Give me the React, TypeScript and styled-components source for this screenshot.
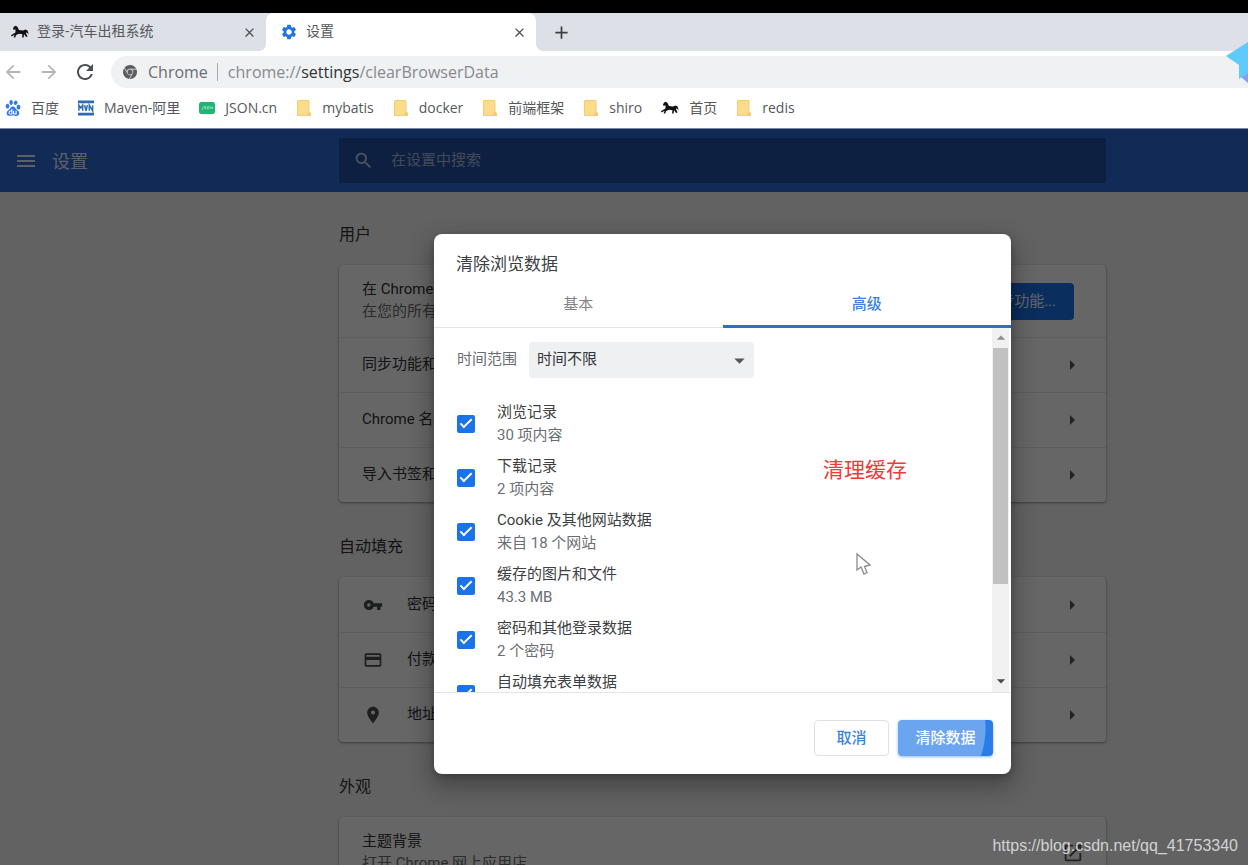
import React from "react";
import styled, { createGlobalStyle, css } from "styled-components";
import {
  MdAdd,
  MdArrowBack,
  MdArrowDropDown,
  MdArrowForward,
  MdArrowRight,
  MdClose,
  MdCreditCard,
  MdMenu,
  MdOpenInNew,
  MdPlace,
  MdRefresh,
  MdSearch,
  MdSettings,
  MdVpnKey,
} from "react-icons/md";
import { SiBaidu, SiGooglechrome } from "react-icons/si";

const uiFont = `"Open Sans", "Noto Sans CJK SC", sans-serif`;
const pageFont = `Roboto, "Noto Sans CJK SC", sans-serif`;

const GlobalStyle = createGlobalStyle`
  *, *::before, *::after { box-sizing: border-box; }
  body { margin: 0; background: #000; font-family: ${pageFont}; font-size: 15px; overflow: hidden; }
  button, input, select { font: inherit; }
  h1, h2, p { margin: 0; font-weight: 400; }
  svg { display: block; flex: none; }
`;

const Screen = styled.div`
  position: relative;
  display: flex;
  flex-direction: column;
  height: 100vh;
  padding-top: 13px;
  overflow: hidden;
`;

/* Browser frame */

const BrowserFrame = styled.header`
  flex: none;
  background: #fff;
  border-bottom: 1px solid #7f8aa6;
  font-family: ${uiFont};
  color: #55585c;
`;

const TabStrip = styled.div`
  display: flex;
  align-items: stretch;
  height: 38px;
  background: #dde0e7;
`;

const BrowserTab = styled.div<{ $active?: boolean }>`
  position: relative;
  display: flex;
  align-items: center;
  gap: 8px;
  width: ${(p) => (p.$active ? 270 : 266)}px;
  padding: 0 8px 0 ${(p) => (p.$active ? 14 : 11)}px;
  font-size: 14px;
  ${(p) =>
    p.$active &&
    css`
      background: #fff;
      border-radius: 8px 8px 0 0;
      &::before,
      &::after {
        content: "";
        position: absolute;
        bottom: 0;
        width: 8px;
        height: 8px;
      }
      &::before {
        left: -8px;
        background: radial-gradient(circle at 0 0, #dde0e7 8px, #fff 8px);
      }
      &::after {
        right: -8px;
        background: radial-gradient(circle at 100% 0, #dde0e7 8px, #fff 8px);
      }
    `}
`;

const TabName = styled.span`
  flex: 1;
  white-space: nowrap;
  line-height: 20px;
  padding-bottom: 2px;
`;

const PlainButton = styled.button`
  display: flex;
  align-items: center;
  justify-content: center;
  padding: 0;
  border: 0;
  background: none;
  color: inherit;
`;

const TabClose = styled(PlainButton)`
  width: 18px;
  height: 18px;
  color: #4d5055;
`;

const NewTab = styled(PlainButton)`
  width: 50px;
  color: #3c4043;
`;

const Toolbar = styled.div`
  display: flex;
  align-items: center;
  height: 41px;
  padding-left: 3px;
`;

const NavButton = styled(PlainButton)<{ $dim?: boolean }>`
  width: 20px;
  height: 24px;
  margin-right: 16px;
  color: ${(p) => (p.$dim ? "#b4b6b9" : "#4b4e52")};
`;

const AddressBar = styled.div`
  display: flex;
  align-items: center;
  flex: 1;
  height: 32px;
  padding-left: 12px;
  border-radius: 16px 0 0 16px;
  background: #eff1f3;
  color: #6a6e73;
  font-size: 16px;
  white-space: nowrap;
`;

const SiteName = styled.span`
  margin-left: 11px;
  padding-right: 9px;
  border-right: 1px solid #a8abb0;
  line-height: 18px;
`;

const Url = styled.span`
  margin-left: 10px;
  color: #868a8f;
  b {
    font-weight: 400;
    color: #303337;
  }
`;

const Bookmarks = styled.nav`
  display: flex;
  align-items: center;
  gap: 19px;
  height: 36px;
  padding: 0 0 4px 5px;
`;

const Bookmark = styled.a`
  display: flex;
  align-items: center;
  gap: 10px;
  color: #55585c;
  font-size: 14px;
  line-height: 20px;
  white-space: nowrap;
  text-decoration: none;
`;

/* Settings page */

const Settings = styled.div`
  position: relative;
  flex: 1;
  min-height: 0;
  overflow: hidden;
  background: #f6f6f6;
`;

const columns = css`
  display: grid;
  grid-template-columns: 339px minmax(0, 767px) 1fr;
`;

const SettingsBar = styled.div`
  ${columns}
  align-items: center;
  height: 63px;
  background: #2d69d6;
  color: #fff;
`;

const BarTitle = styled.div`
  display: flex;
  align-items: center;
  gap: 14px;
  padding-left: 14px;
  opacity: 0.9;
  h1 {
    padding-top: 3px;
    font-size: 18px;
    line-height: 24px;
  }
`;

const SearchField = styled.label`
  display: flex;
  align-items: center;
  gap: 17px;
  height: 45px;
  padding: 0 14px;
  background: #2250a6;
  color: #c4d2ee;
  input {
    flex: 1;
    padding: 0 0 2px;
    border: 0;
    outline: 0;
    background: none;
    color: inherit;
    font-size: 15px;
  }
  input::placeholder {
    color: #a8b9da;
  }
`;

const Content = styled.div`
  ${columns}
`;

const Sections = styled.main`
  grid-column: 2;
  display: flex;
  flex-direction: column;
  gap: 35px;
  padding-top: 33px;
`;

const SectionTitle = styled.h2`
  margin-bottom: 20px;
  font-size: 16px;
  line-height: 20px;
  color: #303236;
`;

const Card = styled.div`
  border-radius: 4px;
  background: #fff;
  box-shadow: 0 1px 2px rgba(60, 64, 67, 0.4), 0 1px 3px 1px rgba(60, 64, 67, 0.15);
`;

const Row = styled.div<{ $tall?: boolean }>`
  display: flex;
  align-items: center;
  min-height: ${(p) => (p.$tall ? 72 : 55)}px;
  padding: 0 22px 0 23px;
  color: #303236;
  & + & {
    border-top: 1px solid #e8e9eb;
  }
  & > svg:first-child {
    margin: 0 24px 0 1px;
    color: #4a4d51;
  }
`;

const RowText = styled.div`
  flex: 1;
  padding-bottom: 2px;
  line-height: 22px;
  white-space: nowrap;
  overflow: hidden;
`;

const Secondary = styled.p`
  color: #6a6e73;
`;

const RowButton = styled(PlainButton)`
  color: #55585c;
`;

const SyncButton = styled.button`
  height: 37px;
  margin-right: 10px;
  padding: 0 18px 3px;
  border: 0;
  border-radius: 4px;
  background: #1a73e8;
  color: #fff;
`;

/* Dialog */

const Scrim = styled.div`
  position: absolute;
  inset: 0;
  display: grid;
  grid-template-columns: 434px minmax(0, 577px) 1fr;
  align-items: start;
  padding-top: 105px;
  background: rgba(0, 0, 0, 0.6);
`;

const Dialog = styled.section`
  grid-column: 2;
  display: flex;
  flex-direction: column;
  border-radius: 8px;
  background: #fff;
  box-shadow: 0 10px 23px 3px rgba(0, 0, 0, 0.3), 0 2px 6px rgba(0, 0, 0, 0.2);
  color: #3c3f43;
`;

const DialogTitle = styled.h2`
  padding: 20px 22px 6px;
  font-size: 17px;
  line-height: 20px;
`;

const Tabs = styled.div`
  display: flex;
  height: 48px;
  border-bottom: 1px solid #e4e5e7;
`;

const TabButton = styled.button<{ $selected?: boolean }>`
  flex: 1;
  height: 48px;
  padding: 0;
  border: 0;
  border-bottom: 3px solid ${(p) => (p.$selected ? "#2f6fc9" : "transparent")};
  background: none;
  color: ${(p) => (p.$selected ? "#3b82dc" : "#808387")};
  font-weight: ${(p) => (p.$selected ? 500 : 400)};
`;

const DialogBody = styled.div`
  display: flex;
  height: 364px;
`;

const Options = styled.div`
  flex: 1;
  padding: 14px 22px 0 23px;
  overflow: hidden;
`;

const RangeRow = styled.div`
  display: flex;
  align-items: center;
  gap: 12px;
  margin-bottom: 19px;
  label {
    padding-bottom: 3px;
    line-height: 20px;
    color: #6a6d71;
  }
`;

const SelectBox = styled.div`
  display: grid;
  align-items: center;
  width: 225px;
  height: 36px;
  border-radius: 4px;
  background: #eff0f2;
  select,
  svg {
    grid-area: 1 / 1;
  }
  select {
    appearance: none;
    height: 36px;
    padding: 0 32px 2px 8px;
    border: 0;
    background: none;
    color: #333639;
  }
  svg {
    justify-self: end;
    margin-right: 2px;
    color: #54575b;
    pointer-events: none;
  }
`;

const Option = styled.label`
  display: flex;
  align-items: center;
  gap: 22px;
  height: 54px;
  line-height: 23px;
`;

const CheckBox = styled.input`
  appearance: none;
  display: grid;
  place-items: center;
  flex: none;
  width: 18px;
  height: 18px;
  margin: 0;
  border: 2px solid #1a73e8;
  border-radius: 2px;
  &:checked {
    background: #1a73e8;
  }
  &:checked::before {
    content: "";
    width: 6px;
    height: 12px;
    margin-top: -4px;
    border: solid #fff;
    border-width: 0 2px 2px 0;
    transform: rotate(45deg);
  }
`;

const Scrollbar = styled.div`
  display: flex;
  flex-direction: column;
  align-items: center;
  gap: 1px;
  width: 17px;
  margin-right: 2px;
  padding: 1px 0 2px;
  background: #f1f1f1;
`;

const ScrollArrow = styled(PlainButton)<{ $up?: boolean }>`
  width: 17px;
  height: 18px;
  color: ${(p) => (p.$up ? "#8c8c8c" : "#4a4a4a")};
  svg {
    transform: ${(p) => (p.$up ? "rotate(180deg)" : "none")};
  }
`;

const Thumb = styled.div`
  width: 15px;
  height: 236px;
  margin-bottom: auto;
  background: #c1c1c1;
`;

const Actions = styled.footer`
  display: flex;
  justify-content: flex-end;
  gap: 9px;
  padding: 27px 18px 18px;
  border-top: 1px solid #e4e5e7;
`;

const ActionButton = styled.button<{ $primary?: boolean }>`
  height: 36px;
  padding: 0 0 3px;
  width: ${(p) => (p.$primary ? 95 : 75)}px;
  border: 1px solid ${(p) => (p.$primary ? "transparent" : "#dfe1e4")};
  border-radius: 4px;
  background: #fff;
  color: #3b82dc;
  font-weight: 500;
  ${(p) =>
    p.$primary &&
    css`
      border: 0;
      background: radial-gradient(circle at 2px 8px, #6ba5f0 85px, #2a7de9 86px);
      color: #fff;
      box-shadow: 0 1px 3px rgba(26, 115, 232, 0.5);
    `}
`;

/* Floating marks */

const Note = styled.p`
  position: absolute;
  left: 823px;
  top: 456px;
  font-size: 21px;
  line-height: 28px;
  color: #f03a37;
`;

const Pointer = styled.svg`
  position: absolute;
  left: 855px;
  top: 552px;
`;

const CornerBird = styled.svg`
  position: absolute;
  right: 0;
  top: 38px;
`;

const Watermark = styled.p`
  position: absolute;
  right: 10px;
  bottom: 9px;
  font-family: "Liberation Sans", sans-serif;
  font-size: 16px;
  line-height: 20px;
  color: #d2d2d2;
`;

const HorseIcon = () => (
  <svg width="18" height="16" viewBox="0 0 18 16" fill="#111" aria-hidden="true">
    <path d="M3 2.500 5 1.800 6.500 3 8 6 12 6.500 14.500 5.500 16.500 6.500 17.800 10.500 15.600 8.200 15 9.200 16.600 12.500 15 13 13.200 10.300 12.500 13.500H11L11.500 10.300 8 9.800 5.200 11 4.200 13.500H2.600L3.600 10.800.6 12.400 0 11.300 4.400 8.600 4.600 5.600 2.400 5.800 2 4.800Z" />
  </svg>
);

const FolderIcon = () => (
  <svg width="16" height="16" viewBox="0 0 16 16" aria-hidden="true">
    <path d="M1 1.5Q1 0 2.500 0H12.500Q13.500 0 13.500 1.500V11.500L15 13V16H1Z" fill="#f2cc74" />
    <path d="M2 1H12.500V12L11 13.500V15H2Z" fill="#fbdc8b" />
  </svg>
);

const MavenIcon = () => (
  <svg width="16" height="16" viewBox="0 0 17 16" aria-hidden="true">
    <path d="M0 0h17v3H0zM0 13h17v3H0z" fill="#2b6cb3" />
    <path
      d="M1 11V5l2 3 2-3v6M7 5l1.500 6L10 5M12 11V5l3.500 6V5"
      fill="none"
      stroke="#2b6cb3"
      strokeWidth="1.6"
    />
  </svg>
);

const JsonIcon = () => (
  <svg width="16" height="16" viewBox="0 0 16 16" aria-hidden="true">
    <rect y="2" width="16" height="12" rx="2.500" fill="#20b573" />
    <path
      d="M4 6.500v2.500H2.500M7 6.500H5.500v1.200H7V9H5.500M8.300 6.500h1.700V9H8.300zM11.500 9V6.500L13.500 9V6.500"
      fill="none"
      stroke="#a5e6c8"
      strokeWidth=".7"
    />
  </svg>
);

const bookmarks = [
  { name: "百度", icon: <SiBaidu size={16} color="#2f7be4" /> },
  { name: "Maven-阿里", icon: <MavenIcon /> },
  { name: "JSON.cn", icon: <JsonIcon /> },
  { name: "mybatis", icon: <FolderIcon /> },
  { name: "docker", icon: <FolderIcon /> },
  { name: "前端框架", icon: <FolderIcon /> },
  { name: "shiro", icon: <FolderIcon /> },
  { name: "首页", icon: <HorseIcon /> },
  { name: "redis", icon: <FolderIcon /> },
];

const options = [
  { title: "浏览记录", detail: "30 项内容" },
  { title: "下载记录", detail: "2 项内容" },
  { title: "Cookie 及其他网站数据", detail: "来自 18 个网站" },
  { title: "缓存的图片和文件", detail: "43.3 MB" },
  { title: "密码和其他登录数据", detail: "2 个密码" },
  { title: "自动填充表单数据", detail: "" },
];

const LinkRow = ({ text, icon }: { text: string; icon?: React.ReactNode }) => (
  <Row>
    {icon}
    <RowText>{text}</RowText>
    <RowButton aria-label={text}>
      <MdArrowRight size={24} />
    </RowButton>
  </Row>
);

export default function App() {
  return (
    <Screen>
      <GlobalStyle />
      <BrowserFrame>
        <TabStrip>
          <BrowserTab>
            <HorseIcon />
            <TabName>登录-汽车出租系统</TabName>
            <TabClose aria-label="关闭">
              <MdClose size={15} />
            </TabClose>
          </BrowserTab>
          <BrowserTab $active>
            <MdSettings size={18} color="#2374e1" />
            <TabName>设置</TabName>
            <TabClose aria-label="关闭">
              <MdClose size={15} />
            </TabClose>
          </BrowserTab>
          <NewTab aria-label="新标签页">
            <MdAdd size={21} />
          </NewTab>
        </TabStrip>
        <Toolbar>
          <NavButton $dim aria-label="后退">
            <MdArrowBack size={22} />
          </NavButton>
          <NavButton $dim aria-label="前进">
            <MdArrowForward size={22} />
          </NavButton>
          <NavButton aria-label="刷新">
            <MdRefresh size={24} />
          </NavButton>
          <AddressBar>
            <SiGooglechrome size={14} color="#5a5d61" />
            <SiteName>Chrome</SiteName>
            <Url>
              chrome://<b>settings</b>/clearBrowserData
            </Url>
          </AddressBar>
        </Toolbar>
        <Bookmarks>
          {bookmarks.map((b) => (
            <Bookmark key={b.name} href="#">
              {b.icon}
              {b.name}
            </Bookmark>
          ))}
        </Bookmarks>
      </BrowserFrame>

      <Settings>
        <SettingsBar>
          <BarTitle>
            <MdMenu size={24} />
            <h1>设置</h1>
          </BarTitle>
          <SearchField>
            <MdSearch size={21} />
            <input type="search" placeholder="在设置中搜索" aria-label="在设置中搜索" />
          </SearchField>
        </SettingsBar>
        <Content>
          <Sections>
            <section>
              <SectionTitle>用户</SectionTitle>
              <Card>
                <Row $tall>
                  <RowText>
                    在 Chrome 中登录
                    <Secondary>在您的所有设备上同步</Secondary>
                  </RowText>
                  <SyncButton>开启同步功能...</SyncButton>
                </Row>
                <LinkRow text="同步功能和 Google 服务" />
                <LinkRow text="Chrome 名称和图片" />
                <LinkRow text="导入书签和设置" />
              </Card>
            </section>
            <section>
              <SectionTitle>自动填充</SectionTitle>
              <Card>
                <LinkRow icon={<MdVpnKey size={20} />} text="密码" />
                <LinkRow icon={<MdCreditCard size={20} />} text="付款方式" />
                <LinkRow icon={<MdPlace size={20} />} text="地址和其他信息" />
              </Card>
            </section>
            <section>
              <SectionTitle>外观</SectionTitle>
              <Card>
                <Row $tall>
                  <RowText>
                    主题背景
                    <Secondary>打开 Chrome 网上应用店</Secondary>
                  </RowText>
                  <RowButton aria-label="打开 Chrome 网上应用店">
                    <MdOpenInNew size={22} />
                  </RowButton>
                </Row>
              </Card>
            </section>
          </Sections>
        </Content>

        <Scrim>
          <Dialog role="dialog" aria-labelledby="dialog-title">
            <DialogTitle id="dialog-title">清除浏览数据</DialogTitle>
            <Tabs role="tablist">
              <TabButton role="tab" aria-selected={false}>
                基本
              </TabButton>
              <TabButton role="tab" aria-selected $selected>
                高级
              </TabButton>
            </Tabs>
            <DialogBody>
              <Options>
                <RangeRow>
                  <label htmlFor="range">时间范围</label>
                  <SelectBox>
                    <select id="range">
                      <option>时间不限</option>
                    </select>
                    <MdArrowDropDown size={25} />
                  </SelectBox>
                </RangeRow>
                {options.map((o) => (
                  <Option key={o.title}>
                    <CheckBox type="checkbox" defaultChecked />
                    <div>
                      {o.title}
                      <Secondary>{o.detail || "\u00a0"}</Secondary>
                    </div>
                  </Option>
                ))}
              </Options>
              <Scrollbar>
                <ScrollArrow $up aria-label="向上滚动">
                  <MdArrowDropDown size={20} />
                </ScrollArrow>
                <Thumb />
                <ScrollArrow aria-label="向下滚动">
                  <MdArrowDropDown size={20} />
                </ScrollArrow>
              </Scrollbar>
            </DialogBody>
            <Actions>
              <ActionButton>取消</ActionButton>
              <ActionButton $primary>清除数据</ActionButton>
            </Actions>
          </Dialog>
        </Scrim>
      </Settings>

      <Note>清理缓存</Note>
      <Pointer width="18" height="24" viewBox="0 0 18 24" aria-hidden="true">
        <path
          d="M2 2V18L6 15L9 22L12 20.500L9.500 14.500L15 13Z"
          fill="#fff"
          stroke="#8b8b8f"
          strokeWidth="1.3"
        />
      </Pointer>
      <CornerBird width="22" height="48" viewBox="0 0 22 48" aria-hidden="true">
        <path d="M22 34 15 39 22 45Z" fill="#8d9bf0" />
        <path d="M22 4 0 18 13 27V41L22 35Z" fill="#5fcbfa" />
      </CornerBird>
      <Watermark>https://blog.csdn.net/qq_41753340</Watermark>
    </Screen>
  );
}
